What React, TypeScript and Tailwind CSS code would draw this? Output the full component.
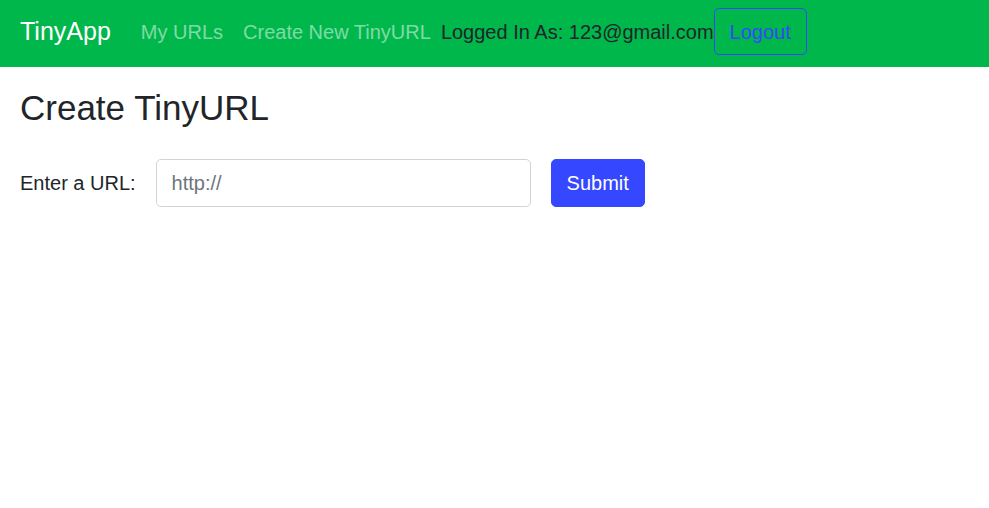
export default function App() {
  return (
    <div className="min-h-screen bg-white font-['Liberation_Sans',Arial,sans-serif] text-[20px] leading-[1.5] text-[#212529]">
      {/* Navbar */}
      <nav className="flex h-[67px] items-center bg-[#00b74b] px-5 pb-[4px]">
        <a href="#" className="mr-5 text-[25px] leading-[1.5] text-white">
          TinyApp
        </a>
        <a href="#" className="px-[10px] text-[rgba(255,255,255,0.5)]">
          My URLs
        </a>
        <a href="#" className="px-[10px] text-[rgba(255,255,255,0.5)]">
          Create New TinyURL
        </a>
        <span>Logged In As: 123@gmail.com</span>
        <button className="h-[47px] rounded-[5px] border border-[#3547ff] px-[15px] text-[#3547ff]">
          Logout
        </button>
      </nav>

      <main className="px-5 pt-5">
        <h3 className="mb-[30px] text-[35px] leading-[1.2] font-normal">
          Create TinyURL
        </h3>
        <form className="flex items-center" onSubmit={(e) => e.preventDefault()}>
          <label className="mr-5">Enter a URL:</label>
          <input
            type="text"
            placeholder="http://"
            className="h-[48px] w-[375px] rounded-[5px] border border-[#ced4da] px-[15px] text-[#495057] outline-none placeholder:text-[#6c757d]"
          />
          <button
            type="submit"
            className="ml-5 h-[48px] rounded-[5px] border border-[#3547ff] bg-[#3547ff] px-[15px] text-white"
          >
            Submit
          </button>
        </form>
      </main>
    </div>
  );
}
